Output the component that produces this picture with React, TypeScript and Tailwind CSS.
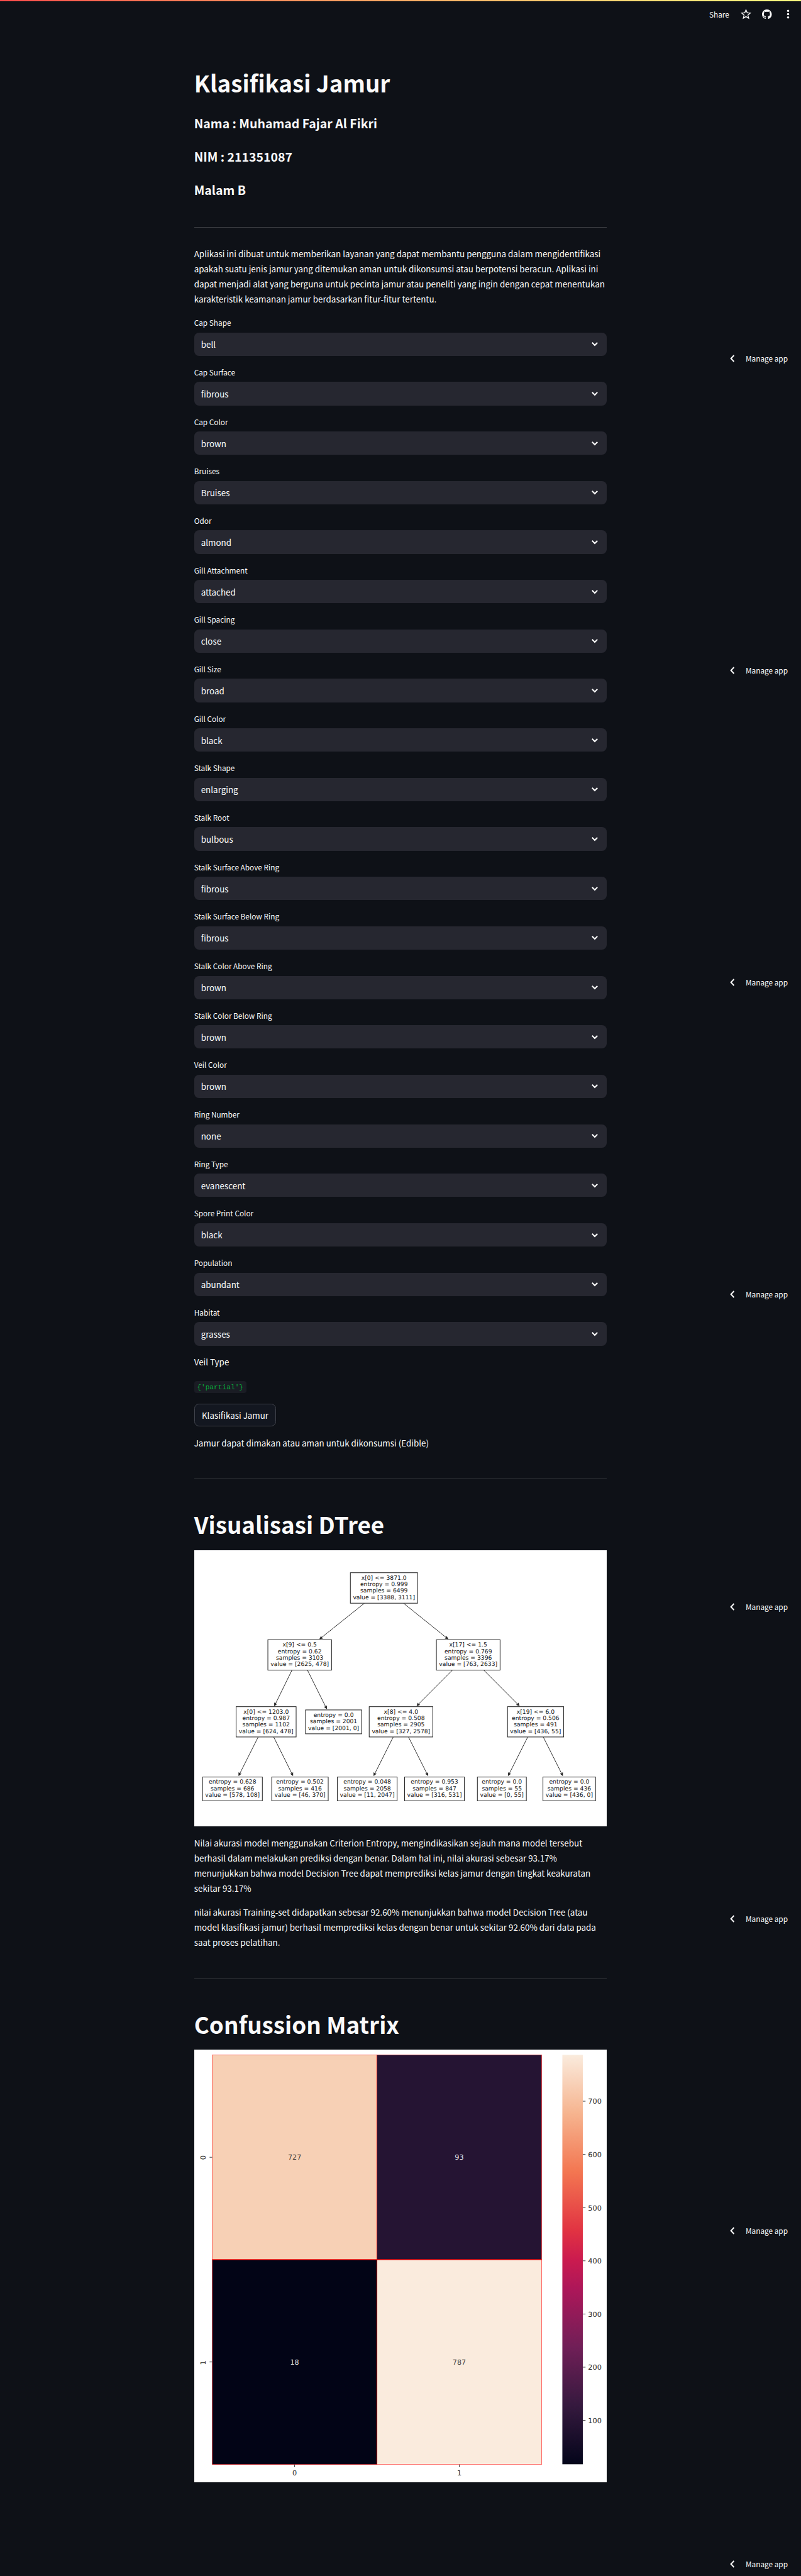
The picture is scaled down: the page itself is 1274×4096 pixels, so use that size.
const fields: [string, string][] = [
  ["Cap Shape", "bell"],
  ["Cap Surface", "fibrous"],
  ["Cap Color", "brown"],
  ["Bruises", "Bruises"],
  ["Odor", "almond"],
  ["Gill Attachment", "attached"],
  ["Gill Spacing", "close"],
  ["Gill Size", "broad"],
  ["Gill Color", "black"],
  ["Stalk Shape", "enlarging"],
  ["Stalk Root", "bulbous"],
  ["Stalk Surface Above Ring", "fibrous"],
  ["Stalk Surface Below Ring", "fibrous"],
  ["Stalk Color Above Ring", "brown"],
  ["Stalk Color Below Ring", "brown"],
  ["Veil Color", "brown"],
  ["Ring Number", "none"],
  ["Ring Type", "evanescent"],
  ["Spore Print Color", "black"],
  ["Population", "abundant"],
  ["Habitat", "grasses"],
];

type TreeNode = { x1: number; x2: number; y1: number; y2: number; lines: string[] };

const nodes: TreeNode[] = [
  { x1: 266.2, x2: 380.8, y1: 38.3, y2: 90.3, lines: ["x[0] <= 3871.0", "entropy = 0.999", "samples = 6499", "value = [3388, 3111]"] },
  { x1: 125.5, x2: 234.1, y1: 152.6, y2: 204.4, lines: ["x[9] <= 0.5", "entropy = 0.62", "samples = 3103", "value = [2625, 478]"] },
  { x1: 412.9, x2: 521.5, y1: 152.6, y2: 204.4, lines: ["x[17] <= 1.5", "entropy = 0.769", "samples = 3396", "value = [763, 2633]"] },
  { x1: 71.3, x2: 173.7, y1: 266.7, y2: 318.4, lines: ["x[0] <= 1203.0", "entropy = 0.987", "samples = 1102", "value = [624, 478]"] },
  { x1: 189.7, x2: 285.5, y1: 272.3, y2: 313, lines: ["entropy = 0.0", "samples = 2001", "value = [2001, 0]"] },
  { x1: 298.3, x2: 406.8, y1: 266.7, y2: 318.4, lines: ["x[8] <= 4.0", "entropy = 0.508", "samples = 2905", "value = [327, 2578]"] },
  { x1: 534.2, x2: 630, y1: 266.7, y2: 318.4, lines: ["x[19] <= 6.0", "entropy = 0.506", "samples = 491", "value = [436, 55]"] },
  { x1: 14.2, x2: 116.1, y1: 386.7, y2: 427.3, lines: ["entropy = 0.628", "samples = 686", "value = [578, 108]"] },
  { x1: 132.1, x2: 228.4, y1: 386.7, y2: 427.3, lines: ["entropy = 0.502", "samples = 416", "value = [46, 370]"] },
  { x1: 244, x2: 345.9, y1: 386.7, y2: 427.3, lines: ["entropy = 0.048", "samples = 2058", "value = [11, 2047]"] },
  { x1: 358.7, x2: 460.6, y1: 386.7, y2: 427.3, lines: ["entropy = 0.953", "samples = 847", "value = [316, 531]"] },
  { x1: 482.8, x2: 566.3, y1: 386.7, y2: 427.3, lines: ["entropy = 0.0", "samples = 55", "value = [0, 55]"] },
  { x1: 594.6, x2: 684.3, y1: 386.7, y2: 427.3, lines: ["entropy = 0.0", "samples = 436", "value = [436, 0]"] },
];

const edges = [
  [290.2, 90.3, 214.3, 151],
  [356.8, 90.3, 432.3, 151],
  [166.6, 204.4, 136.9, 265],
  [193, 204.4, 225.6, 270],
  [440.3, 204.4, 379.9, 265],
  [493.6, 204.4, 554, 265],
  [109, 318.4, 76, 384],
  [135.4, 318.4, 168, 384],
  [339.3, 318.4, 306.3, 384],
  [365.3, 318.4, 398.3, 384],
  [568.7, 318.4, 535.6, 384],
  [595.1, 318.4, 628.1, 384],
];

function DecisionTree() {
  return (
    <svg viewBox="0 0 704 471" preserveAspectRatio="none" className="block h-[439.2px] w-full bg-white">
      <defs>
        <marker id="head" markerUnits="userSpaceOnUse" markerWidth="8" markerHeight="8" refX="5.5" refY="4" orient="auto">
          <path d="M1.2 1.8 L5.8 4 L1.2 6.2 L2.4 4 Z" fill="#222" stroke="#222" strokeWidth="0.8" />
        </marker>
      </defs>
      {edges.map(([x1, y1, x2, y2], i) => (
        <line key={i} x1={x1} y1={y1} x2={x2} y2={y2} stroke="#222" strokeWidth="1" markerEnd="url(#head)" />
      ))}
      {nodes.map((n, i) => (
        <g key={i}>
          <rect x={n.x1} y={n.y1} width={n.x2 - n.x1} height={n.y2 - n.y1} fill="#fff" stroke="#222" strokeWidth="1.1" />
          {n.lines.map((line, j) => (
            <text
              key={j}
              x={(n.x1 + n.x2) / 2}
              y={n.y1 + 11.7 + j * 11.1}
              textAnchor="middle"
              fontSize="9.9"
              fill="#111"
              textRendering="geometricPrecision"
              className="font-['DejaVu_Sans',sans-serif]"
            >
              {line}
            </text>
          ))}
        </g>
      ))}
    </svg>
  );
}

const scale: [number, string][] = [
  [0, "#faebdd"],
  [14.3, "#f6b48f"],
  [28.6, "#f37651"],
  [42.9, "#e13342"],
  [50, "#cb1b4f"],
  [57.1, "#ad1759"],
  [71.4, "#701f57"],
  [85.7, "#35193e"],
  [100, "#03051a"],
];

const cells = [
  { x: 30.7, y: 9, fill: "#f7d0b5", text: "727", ink: "#262626" },
  { x: 311.5, y: 9, fill: "#251433", text: "93", ink: "#ffffff" },
  { x: 30.7, y: 358.2, fill: "#020416", text: "18", ink: "#ffffff" },
  { x: 311.5, y: 358.2, fill: "#faebdd", text: "787", ink: "#262626" },
];

function ConfusionMatrix() {
  return (
    <svg
      viewBox="0 0 704 737"
      preserveAspectRatio="none"
      textRendering="geometricPrecision"
      className="block h-[687.3px] w-full bg-white font-['DejaVu_Sans',sans-serif]"
    >
      <defs>
        <linearGradient id="rocket" x1="0" y1="0" x2="0" y2="1">
          {scale.map(([o, c]) => (
            <stop key={o} offset={`${o}%`} stopColor={c} />
          ))}
        </linearGradient>
      </defs>
      {cells.map((c) => (
        <g key={c.text}>
          <rect x={c.x} y={c.y} width="280.8" height="349.2" fill={c.fill} stroke="#ff0000" strokeOpacity="0.75" strokeWidth="0.8" />
          <text x={c.x + 140.4} y={c.y + 178.6} textAnchor="middle" fontSize="12" fill={c.ink} fillOpacity="0.9">
            {c.text}
          </text>
        </g>
      ))}
      <path d="M30.7 358.2H592.3M311.5 9V707.4" stroke="#f00000" strokeWidth="1.1" />
      <rect x="627.7" y="9" width="34.9" height="698" fill="url(#rocket)" />
      <g fill="#262626" fontSize="12.1">
        {[700, 600, 500, 400, 300, 200, 100].map((v, i) => (
          <g key={v}>
            <line x1="662.6" x2="667.2" y1={88 + i * 90.7} y2={88 + i * 90.7} stroke="#333" />
            <text x="671.6" y={92.6 + i * 90.7}>
              {v}
            </text>
          </g>
        ))}
        <path d="M171.1 707.4v4.6M451.9 707.4v4.6M26.1 183.6h4.6M26.1 532.6h4.6" stroke="#333" />
        <text x="171.1" y="725.8" textAnchor="middle">0</text>
        <text x="451.9" y="725.8" textAnchor="middle">1</text>
        <text transform="translate(19.4 184) rotate(-90)" textAnchor="middle">0</text>
        <text transform="translate(19.4 534) rotate(-90)" textAnchor="middle">1</text>
      </g>
    </svg>
  );
}

function SelectField({ label, value }: { label: string; value: string }) {
  return (
    <div className="mb-[14.92px] h-[63.78px]">
      <div className="h-[26.48px] text-[11.8px] leading-[22.4px]">{label}</div>
      <div className="flex h-[37.3px] items-center justify-between rounded-[7.5px] bg-[#262730] pl-[11px] pr-[13px] text-[13.4px]">
        <span>{value}</span>
        <svg viewBox="0 0 12 12" className="size-3">
          <path d="M1.8 3.7 L6 8 L10.2 3.7" fill="none" stroke="#fafafa" strokeWidth="2" />
        </svg>
      </div>
    </div>
  );
}

function Title({ children }: { children: string }) {
  return (
    <h1 className="h-[82.82px] pt-[17px] text-[36.8px] font-bold leading-[49.24px]">{children}</h1>
  );
}

function Divider() {
  return <hr className="my-[29.84px] h-px border-0 bg-[#3d3f43]" />;
}

function Toolbar() {
  return (
    <div className="absolute right-0 top-0 flex h-[45px] w-[146px] items-center text-[11.8px]">
      <span className="w-[49.5px]">Share</span>
      <svg viewBox="0 0 16 16" className="size-[17px]">
        <path
          d="M8 1.6l1.8 4.4 4.7.4-3.6 3.1 1.1 4.6L8 11.6l-4 2.5 1.1-4.6L1.5 6.4l4.7-.4z"
          fill="none"
          stroke="#fafafa"
          strokeWidth="1.3"
        />
      </svg>
      <svg viewBox="0 0 16 16" className="ml-[17.5px] size-[15.5px]" fill="#fafafa">
        <path d="M8 0C3.58 0 0 3.58 0 8c0 3.54 2.29 6.53 5.47 7.59.4.07.55-.17.55-.38 0-.19-.01-.82-.01-1.49-2.01.37-2.53-.49-2.69-.94-.09-.23-.48-.94-.82-1.13-.28-.15-.68-.52-.01-.53.63-.01 1.08.58 1.23.82.72 1.21 1.87.87 2.33.66.07-.52.28-.87.51-1.07-1.78-.2-3.64-.89-3.64-3.95 0-.87.31-1.59.82-2.15-.08-.2-.36-1.02.08-2.12 0 0 .67-.21 2.2.82.64-.18 1.32-.27 2-.27s1.36.09 2 .27c1.53-1.04 2.2-.82 2.2-.82.44 1.1.16 1.92.08 2.12.51.56.82 1.27.82 2.15 0 3.07-1.87 3.75-3.65 3.95.29.25.54.73.54 1.48 0 1.07-.01 1.93-.01 2.2 0 .21.15.46.55.38A8.01 8.01 0 0 0 16 8c0-4.42-3.58-8-8-8z" />
      </svg>
      <svg viewBox="0 0 16 16" className="ml-[17px] size-[17px]" fill="#fafafa">
        <circle cx="8" cy="3" r="1.7" />
        <circle cx="8" cy="8" r="1.7" />
        <circle cx="8" cy="13" r="1.7" />
      </svg>
    </div>
  );
}

const manageTops = [559.8, 1056, 1552, 2048.3, 2544.5, 3040.7, 3537, 4066.5];

function ManageApp({ top }: { top: number }) {
  return (
    <div className="absolute right-0 flex h-5 w-[115px] items-center text-[11.8px] leading-5" style={{ top }}>
      <svg viewBox="0 0 12 12" className="mr-[15px] size-3">
        <path d="M8.4 1 L3.6 6 L8.4 11" fill="none" stroke="#fafafa" strokeWidth="2" />
      </svg>
      <span>Manage app</span>
    </div>
  );
}

export default function App() {
  return (
    <div className="relative h-[4096px] w-[1274px] overflow-hidden bg-[#0e1117] font-['Noto_Sans_CJK_SC',sans-serif] text-[#fafafa]">
      <div className="absolute inset-x-0 top-0 h-0.5 bg-gradient-to-r from-[#ff4b4b] to-[#fffd80]" />
      <Toolbar />
      <main className="mx-auto w-[656.6px] pt-[89.53px]">
        <Title>Klasifikasi Jamur</Title>
        {["Nama : Muhamad Fajar Al Fikri", "NIM : 211351087", "Malam B"].map((t) => (
          <h4 key={t} className="h-[52.97px] pt-[10.7px] text-[19.5px] font-semibold leading-[26.86px]">
            {t}
          </h4>
        ))}
        <Divider />
        <p className="mb-[14.92px] whitespace-nowrap text-[13.4px] leading-[23.876px]">
          Aplikasi ini dibuat untuk memberikan layanan yang dapat membantu pengguna dalam mengidentifikasi
          <br />
          apakah suatu jenis jamur yang ditemukan aman untuk dikonsumsi atau berpotensi beracun. Aplikasi ini
          <br />
          dapat menjadi alat yang berguna untuk pecinta jamur atau peneliti yang ingin dengan cepat menentukan
          <br />
          karakteristik keamanan jamur berdasarkan fitur-fitur tertentu.
        </p>
        {fields.map(([label, value]) => (
          <SelectField key={label} label={label} value={value} />
        ))}
        <p className="mb-[14.92px] text-[13.4px] leading-[23.876px]">Veil Type</p>
        <div className="mb-[14.92px] flex h-[23.88px] items-center pt-px">
          <code className="flex h-[18.7px] items-center rounded bg-[#1a1c24] px-[4.5px] pt-px font-['Liberation_Mono',monospace] text-[11.2px] text-[#09ab3b]">
            {"{'partial'}"}
          </code>
        </div>
        <button className="flex h-[35.8px] w-[130.6px] items-center justify-center rounded-[7.5px] border border-[#41444c] bg-[#131720] text-[13.4px]">
          Klasifikasi Jamur
        </button>
        <p className="mt-[14.92px] mb-[44.76px] text-[13.4px] leading-[23.876px]">
          Jamur dapat dimakan atau aman untuk dikonsumsi (Edible)
        </p>
        <Divider />
        <Title>Visualisasi DTree</Title>
        <DecisionTree />
        <div className="mt-[14.92px] mb-[44.76px] flex flex-col gap-[14.92px] whitespace-nowrap text-[13.4px] leading-[23.876px]">
          <p>
            Nilai akurasi model menggunakan Criterion Entropy, mengindikasikan sejauh mana model tersebut
            <br />
            berhasil dalam melakukan prediksi dengan benar. Dalam hal ini, nilai akurasi sebesar 93.17%
            <br />
            menunjukkan bahwa model Decision Tree dapat memprediksi kelas jamur dengan tingkat keakuratan
            <br />
            sekitar 93.17%
          </p>
          <p>
            nilai akurasi Training-set didapatkan sebesar 92.60% menunjukkan bahwa model Decision Tree (atau
            <br />
            model klasifikasi jamur) berhasil memprediksi kelas dengan benar untuk sekitar 92.60% dari data pada
            <br />
            saat proses pelatihan.
          </p>
        </div>
        <Divider />
        <Title>Confussion Matrix</Title>
        <ConfusionMatrix />
      </main>
      {manageTops.map((top) => (
        <ManageApp key={top} top={top} />
      ))}
    </div>
  );
}
